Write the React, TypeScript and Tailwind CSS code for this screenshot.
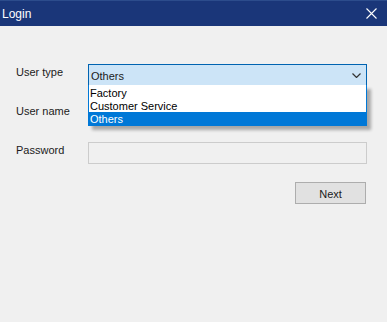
const font = { fontFamily: '"Liberation Sans", Arial, sans-serif' }

const options = ['Factory', 'Customer Service', 'Others']

const App = () => {
  const selected = 'Others'

  return (
    <div className="w-[387px] h-[322px] bg-[#f0f0f0] flex flex-col overflow-hidden" style={font}>
      <div className="h-[26px] bg-[#1a3679] border-t border-[#2c4c8c] flex items-center justify-between pl-[2px] pr-[10px]">
        <span className="text-white text-[12px] leading-none">Login</span>
        <svg width="11" height="11" viewBox="0 0 11 11">
          <path d="M0.5 0.5L10.5 10.5M10.5 0.5L0.5 10.5" stroke="#ffffff" strokeWidth="1.1" fill="none" />
        </svg>
      </div>

      <div className="grid grid-cols-[72px_279px] gap-y-[17px] pl-[16px] pt-[38px] text-[11px] text-[#1b1b1b]">
        <label className="leading-[16px]">User type</label>
        <div className="relative h-[22px]">
          <div className="h-full border border-[#0063b1] bg-[#cce4f7] flex items-center justify-between pl-[2px] pr-[5px]">
            <span className="leading-[14px] pt-[1px]">{selected}</span>
            <svg width="9" height="5" viewBox="0 0 9 5">
              <path d="M0.5 0.5L4.5 4.5L8.5 0.5" stroke="#333333" strokeWidth="1.2" fill="none" />
            </svg>
          </div>
          <ul className="absolute left-0 top-[21px] w-[279px] bg-white border border-[#0078d7] border-t-0 pt-[1px] shadow-[4px_4px_3px_rgba(0,0,0,0.3)] z-10">
            {options.map((opt) => (
              <li
                key={opt}
                className={`h-[13px] leading-[14px] pl-[1px] ${opt === selected ? 'bg-[#0078d7] text-white' : 'text-[#000000]'}`}
              >
                {opt}
              </li>
            ))}
          </ul>
        </div>

        <label className="leading-[16px]">User name</label>
        <div className="h-[22px] border border-[#7a7a7a] bg-white" />

        <label className="leading-[16px]">Password</label>
        <div className="h-[22px] border border-[#cccccc] bg-[#f0f0f0]" />

        <div />
        <div className="flex justify-end pr-[1px] mt-[1px]">
          <button className="w-[71px] h-[22px] border border-[#adadad] bg-[#e1e1e1] text-[11px] text-[#1b1b1b] leading-[14px] pt-[1px]">
            Next
          </button>
        </div>
      </div>
    </div>
  )
}

export default App
